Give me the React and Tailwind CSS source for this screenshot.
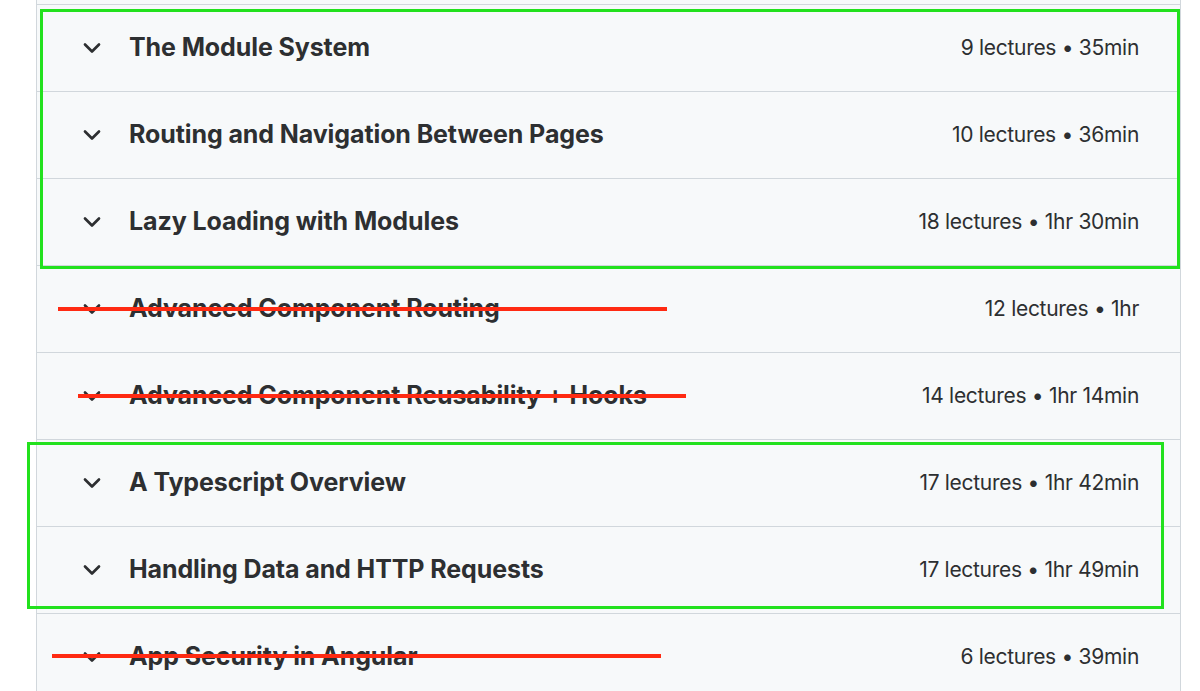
import { ChevronDown } from "lucide-react";

const sections = [
  { title: "The Module System", meta: "9 lectures • 35min" },
  { title: "Routing and Navigation Between Pages", meta: "10 lectures • 36min" },
  { title: "Lazy Loading with Modules", meta: "18 lectures • 1hr 30min" },
  { title: "Advanced Component Routing", meta: "12 lectures • 1hr" },
  { title: "Advanced Component Reusability + Hooks", meta: "14 lectures • 1hr 14min" },
  { title: "A Typescript Overview", meta: "17 lectures • 1hr 42min" },
  { title: "Handling Data and HTTP Requests", meta: "17 lectures • 1hr 49min" },
  { title: "App Security in Angular", meta: "6 lectures • 39min" },
];

const SectionRow = ({ title, meta }) => (
  <div className="h-[87px] border-t border-[#d1d7dc] flex items-center pl-[41px] pr-[41px]">
    <ChevronDown className="w-[28px] h-[28px] text-[#2d2f31] shrink-0" strokeWidth={2.3} />
    <span className="ml-[23px] text-[25px] font-bold text-[#2d2f31] tracking-[-0.1px]">{title}</span>
    <span className="ml-auto text-[21px] text-[#2d2f31] tracking-[-0.3px]">{meta}</span>
  </div>
);

export default function App() {
  return (
    <div className="relative w-[1200px] h-[691px] overflow-hidden bg-white" style={{ fontFamily: 'Inter, "Liberation Sans", sans-serif' }}>
      <div className="ml-[36px] w-[1145px] bg-[#f7f9fa] border-x border-[#d1d7dc]">
        <div className="h-[4px]"></div>
        {sections.map((s) => (
          <SectionRow key={s.title} {...s} />
        ))}
      </div>

      {/* annotations */}
      <div className="absolute left-[40px] top-[9px] w-[1140px] h-[260px] border-[3px] border-[#22e11d]"></div>
      <div className="absolute left-[27px] top-[442px] w-[1137px] h-[167px] border-[3px] border-[#22e11d]"></div>
      <div className="absolute left-[58px] top-[307px] w-[609px] h-[4px] bg-[#ff2a12]"></div>
      <div className="absolute left-[78px] top-[394px] w-[608px] h-[4px] bg-[#ff2a12]"></div>
      <div className="absolute left-[52px] top-[654px] w-[609px] h-[4px] bg-[#ff2a12]"></div>
    </div>
  );
}
